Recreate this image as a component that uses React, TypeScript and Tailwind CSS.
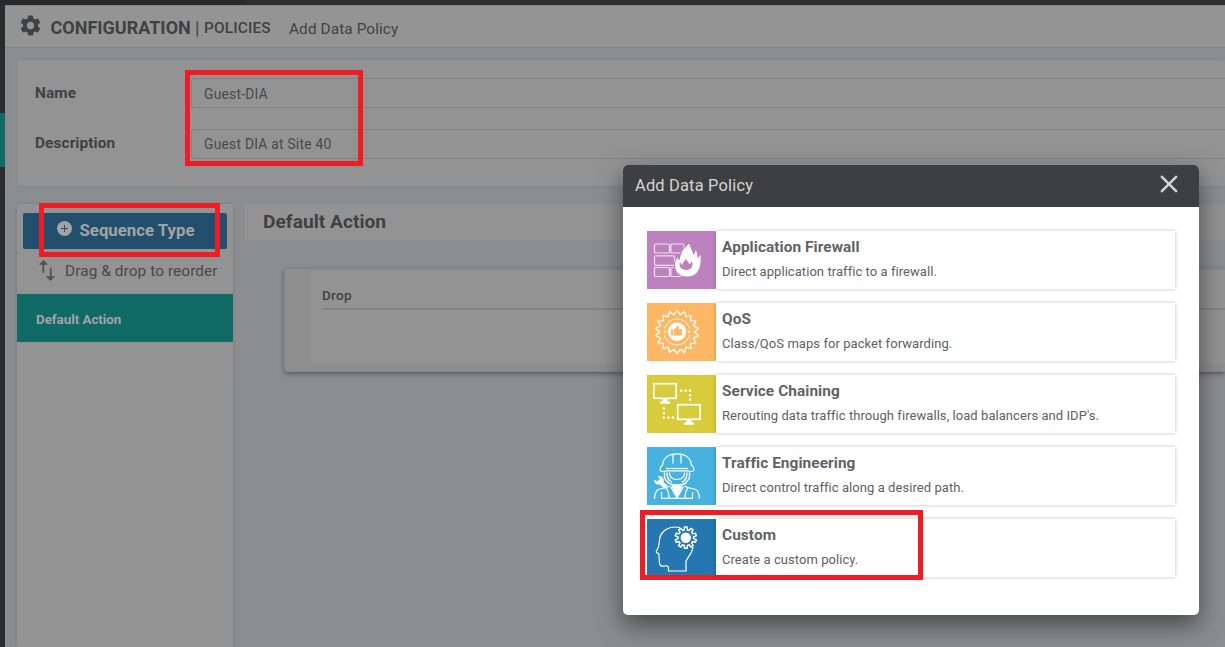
import type { ReactNode } from "react";
import { MdSettings, MdClose } from "react-icons/md";

function gearPath(cx: number, cy: number, teeth: number, outer: number, inner: number) {
  const step = (Math.PI * 2) / teeth;
  const parts: string[] = [];
  for (let i = 0; i < teeth; i++) {
    const a = i * step - Math.PI / 2;
    [
      [-0.32, inner],
      [-0.2, outer],
      [0.2, outer],
      [0.32, inner],
    ].forEach(([k, r]) => {
      const t = a + k * step;
      parts.push(`${(cx + r * Math.cos(t)).toFixed(2)} ${(cy + r * Math.sin(t)).toFixed(2)}`);
    });
  }
  return `M${parts.join("L")}Z`;
}

function burstPath(cx: number, cy: number, points: number, outer: number, inner: number) {
  const parts: string[] = [];
  for (let i = 0; i < points * 2; i++) {
    const t = (i * Math.PI) / points - Math.PI / 2;
    const r = i % 2 ? inner : outer;
    parts.push(`${(cx + r * Math.cos(t)).toFixed(2)} ${(cy + r * Math.sin(t)).toFixed(2)}`);
  }
  return `M${parts.join("L")}Z`;
}

function Tile({ children }: { children: ReactNode }) {
  return (
    <svg width="69" height="58" viewBox="0 0 69 58" fill="none" stroke="#fff" strokeWidth="1.2" strokeLinejoin="round">
      {children}
    </svg>
  );
}

function FirewallIcon() {
  return (
    <Tile>
      <g stroke="#f0dff0">
        <rect x="7.5" y="13" width="15" height="9" rx="1" />
        <rect x="24" y="13" width="13" height="9" rx="1" />
        <rect x="7.5" y="24.800" width="20" height="9.500" rx="1" />
        <rect x="7.5" y="36.500" width="15" height="9" rx="1" />
        <rect x="24" y="36.500" width="12" height="9" rx="1" />
      </g>
      <path
        d="M42.500 11C43 16 46 18 46.500 23C48 21 48.500 19.500 48.500 17C51 20 50.500 23.500 51 26C52 25 53 23.500 53.500 21.500C55 29 54 37 50.500 41.500C48 45 44 46 40 46C33.500 46 28.500 42.500 27.500 36C27 31.500 28.500 28 30.500 25.500C31.500 27 31.500 27.500 32 28.500C33 25 33 23.500 34.500 20.500C36 17 40 15 42.500 11Z"
        fill="#fff"
        stroke="#bd82bd"
        strokeWidth="1.2"
      />
      <path
        d="M38.500 27.500C40 30 41.800 31 42.300 33.500C43.500 32.800 44 31.500 44.500 30C46.500 34 45.500 38.500 39.500 39C33.500 38.500 31.800 35.500 32.800 31C34 32.300 34.500 33.500 35.200 34.200C35.500 31.500 38 30 38.500 27.500Z"
        fill="#bd82bd"
        stroke="none"
      />
    </Tile>
  );
}

function QosIcon() {
  return (
    <Tile>
      <path d={burstPath(30, 29, 18, 21.7, 17.6)} strokeWidth="1.300" />
      <circle cx="30" cy="29" r="13" strokeWidth="0.900" />
      <path d="M17.500 25.500V32M42.500 25.500V32" stroke="#feb765" strokeWidth="4" />
      <circle cx="30" cy="28.800" r="9.200" fill="#fff" stroke="none" />
      <circle cx="18" cy="28.700" r="1.200" fill="#fff" stroke="none" />
      <circle cx="42" cy="28.700" r="1.200" fill="#fff" stroke="none" />
      <path d="M24 26.500H26.300V32.500H24ZM27.100 26.500L29.500 24.500V23C31.500 22.500 32.500 23.500 31.700 26H35V32.500H27.100Z" fill="#feb765" stroke="none" />
    </Tile>
  );
}

function ChainIcon() {
  return (
    <Tile>
      <rect x="6.800" y="8.700" width="22.400" height="14.600" strokeWidth="1.700" strokeLinejoin="miter" />
      <path d="M15.500 24H20.500V26.500H23V28.700H13V26.500H15.500Z" fill="#fff" stroke="none" />
      <rect x="30.700" y="29.700" width="22.400" height="14.600" strokeWidth="1.700" strokeLinejoin="miter" />
      <path d="M39.500 45H44.500V47.500H47V49.700H37V47.500H39.500Z" fill="#fff" stroke="none" />
      <path d="M33 14.500h2.200v2.200h-2.200zM37.500 14.500h2.200v2.200h-2.200zM42 14.500h2.200v2.200h-2.200zM42 19h2.200v2.200h-2.200zM42 23.500h2.200v2.200h-2.200zM15.800 32.500h2.200v2.200h-2.200zM15.800 37h2.200v2.200h-2.200zM15.800 41.500h2.200v2.200h-2.200zM20.300 41.500h2.200v2.200h-2.200zM24.800 41.500h2.200v2.200h-2.200z" fill="#fff" stroke="none" />
    </Tile>
  );
}

function EngineerIcon() {
  return (
    <Tile>
      <path d="M15.500 19C15.500 11.500 21 6.800 30 6.800S44.500 11.500 44.500 19" />
      <path d="M15.500 18.500C13.500 19 13 20.500 13.200 23C13.300 24 14 24.500 16 24.500L20 23.800H40L44 24.500C46 24.500 46.700 24 46.800 23C47 20.500 46.500 19 44.500 18.500" />
      <path d="M26 7V16.500M34 7V16.500" />
      <path d="M19 21.500H41" />
      <path d="M22.500 25.500C22.500 30 25.500 32.500 30 32.500S37.500 30 37.500 25.500" />
      <path d="M17.500 25.500V30C17.500 33 20 34 21.500 36C24 38.500 27 38 30 38S36 38.500 38.500 36C40 34 42.500 33 42.500 30V25.500M20 25.500C20 30.500 22 34 25 35.300M40 25.500C40 30.500 38 34 35 35.300" strokeWidth="1.400" />
      <path d="M24.500 38.500H35.500L33.500 43.500L30 50L26.500 43.500Z" fill="#fff" stroke="none" />
      <path d="M22.500 39C19 42 12 40.500 9.500 44C8 46.500 7.500 49 7.500 52M37.500 39C41 42 48 40.500 50.500 44C52 46.500 52.500 49 52.500 52M14.500 45V51.300H45.500V45M23.500 39.500L30 51M36.500 39.500L30 51M18.500 40.500C21.500 43 22 47 22 51M41.500 40.500C38.500 43 38 47 38 51" strokeWidth="1.200" />
      <path d="M11 29C15 28.500 17.500 31.500 16.500 35.200L20.500 38.500L17 41.500L13 37.500C9.500 38.300 7 36 7.200 32.500L10.300 34.500L12.800 32.300Z" fill="#fff" stroke="none" />
    </Tile>
  );
}

function CustomIcon() {
  return (
    <Tile>
      <path d="M33 8.700C22 6 12.500 12 12.300 23C12.200 27 11.500 29 9.300 32.500C9 33.500 10 34.200 11.800 34.500L12.500 44C12.700 46.500 14 47.500 18 47C21 46.500 21.500 47.500 21.500 50V52H39V43C39 39 45 36 46 28" />
      <path d={gearPath(38.8, 18.7, 10, 10.700, 7.800)} strokeWidth="1.500" />
      <circle cx="38.800" cy="18.700" r="5.200" fill="#fff" stroke="none" />
    </Tile>
  );
}

const policies = [
  { title: "Application Firewall", text: "Direct application traffic to a firewall.", color: "bg-[#bd82bd]", icon: <FirewallIcon /> },
  { title: "QoS", text: "Class/QoS maps for packet forwarding.", color: "bg-[#feb765]", icon: <QosIcon /> },
  { title: "Service Chaining", text: "Rerouting data traffic through firewalls, load balancers and IDP's.", color: "bg-[#d8cb3c]", icon: <ChainIcon /> },
  { title: "Traffic Engineering", text: "Direct control traffic along a desired path.", color: "bg-[#47b2e0]", icon: <EngineerIcon /> },
  { title: "Custom", text: "Create a custom policy.", color: "bg-[#2477b0]", icon: <CustomIcon /> },
];

const fields = [
  { label: "Name", value: "Guest-DIA", labelLeading: "leading-[31px]", valueLeading: "leading-[30px]" },
  { label: "Description", value: "Guest DIA at Site 40", labelLeading: "leading-[29px]", valueLeading: "leading-[28px]" },
];

function Dialog() {
  return (
    <div className="absolute top-[165px] left-[623px] h-[450px] w-[576px] overflow-visible rounded-[5px] bg-white shadow-[0_10px_26px_rgba(0,0,0,0.5)]">
      <div className="flex h-[42px] items-center justify-between rounded-t-[5px] bg-[#3e3f41] pr-[15px] pl-3 text-[16.4px] tracking-[0.2px] text-[#d5d5d5]">
        <span className="pt-px">Add Data Policy</span>
        <MdClose className="-mt-1 size-[30px]" />
      </div>
      <div className="flex flex-col gap-[14px] pt-6 pr-6 pl-6">
        {policies.map((p) => (
          <div key={p.title} className="flex h-[58px]">
            <div className={`w-[69px] shrink-0 ${p.color}`}>{p.icon}</div>
            <div className="flex-1 pl-[6px] shadow-[0_0_4px_rgba(0,0,0,0.25)]">
              <div className="pt-[4px] text-[15.4px] leading-6 font-bold tracking-[0.07px] text-[#626365]">{p.title}</div>
              <div className="pt-[3px] text-[13px] leading-5 tracking-[0.06px] text-[#606163]">{p.text}</div>
            </div>
          </div>
        ))}
      </div>
    </div>
  );
}

export default function App() {
  return (
    <div className="relative h-[647px] w-[1225px] overflow-hidden bg-[#8c8d91] font-['Roboto',sans-serif]">
      <div className="flex h-[5px]">
        <div className="w-[245px] bg-[#28292b]" />
        <div className="flex-1 bg-[#2e2f31]" />
      </div>
      <div className="flex h-[642px]">
        <div className="w-[5px] shrink-0 bg-[#2a2b2d] pt-[108px]">
          <div className="h-[54px] bg-[#106b67]" />
        </div>
        <div className="flex flex-1 flex-col">
          <header className="flex h-[43px] shrink-0 items-center border-t border-b border-t-[#858585] border-b-[#838383] bg-[#949494] pl-[13px] text-[#404142]">
            <MdSettings className="-mt-[3px] size-[25px]" />
            <span className="ml-[7.5px] w-[144.5px] pt-[2px] text-[18px] font-bold whitespace-nowrap">CONFIGURATION</span>
            <span className="w-[9px] pt-px text-[18px]">|</span>
            <span className="w-[85px] pt-[4px] text-[15.400px] font-medium tracking-[0.15px]">POLICIES</span>
            <span className="pt-[6px] text-[15.400px] tracking-[0.08px]">Add Data Policy</span>
          </header>
          <section className="mt-3 ml-3 flex h-[126px] shrink-0 flex-col gap-[21px] bg-[#939393] pt-[18px] pl-[18px] shadow-[0_0_3px_rgba(0,0,0,0.12)]">
            {fields.map((f) => (
              <div key={f.label} className="flex h-[30px]">
                <div className={`w-[156px] text-[15.4px] font-bold tracking-[0.1px] text-[#404142] ${f.labelLeading}`}>{f.label}</div>
                <div
                  className={`flex-1 rounded-l-[3px] border border-r-0 border-[#838383] pl-[12px] text-[13.8px] tracking-[0.25px] text-[#484949] ${f.valueLeading}`}
                >
                  {f.value}
                </div>
              </div>
            ))}
          </section>
          <div className="mt-[18px] ml-3 flex flex-1 gap-3">
            <aside className="flex w-[216px] flex-col bg-[#939393] shadow-[0_0_3px_rgba(0,0,0,0.15)]">
              <button className="mx-[6px] mt-[9px] flex h-9 items-center rounded-[2px] bg-[#234f6e] pl-[34px] text-[16.700px] font-bold tracking-[0.05px] text-[#a3a3a3]">
                <svg className="-mt-[5px] mr-[7.5px]" width="15" height="15" viewBox="0 0 15 15">
                  <circle cx="7.500" cy="7.500" r="7.500" fill="#a3a3a3" />
                  <path d="M7.500 4V11M4 7.500H11" stroke="#234f6e" strokeWidth="1" />
                </svg>
                Sequence Type
              </button>
              <div className="flex h-[45px] items-center pl-[22px] text-[15.400px] tracking-[0.08px] text-[#484949]">
                <svg className="mt-[-2px] mr-[10px]" width="16" height="21" viewBox="5 3 14 18" preserveAspectRatio="none" fill="#505151">
                  <path d="M16 17.010V10H14.500V17.010H11L15 21L19 17.010ZM9 3L5 6.990H8V14H9.500V6.990H13Z" />
                </svg>
                Drag &amp; drop to reorder
              </div>
              <div className="h-12 bg-[#106b67] pl-[19px] text-[13.300px] leading-[51px] font-bold text-[#a3a3a3]">Default Action</div>
            </aside>
            <main className="flex-1">
              <div className="h-9 bg-[#939393] pl-[18px] text-[19.200px] leading-[36px] font-bold text-[#404142]">Default Action</div>
              <div className="mt-7 ml-[39px] h-[104px] rounded-l-[3px] border border-r-0 border-[#858585] bg-[#8e8e8e] pt-[2px] pl-[25px] shadow-[0_2px_5px_rgba(0,0,0,0.35)]">
                <div className="h-[92px] bg-[#939393] pl-3">
                  <div className="h-[39px] border-b-2 border-[#848484] pt-[14px] text-[13.500px] leading-5 font-medium tracking-[0.3px] text-[#404142]">Drop</div>
                </div>
              </div>
            </main>
          </div>
        </div>
      </div>
      <Dialog />
      <div className="absolute top-[70px] left-[185px] h-24 w-[178px] border-[5px] border-[#ee1c25]" />
      <div className="absolute top-[203px] left-[39px] h-[54px] w-[181px] border-[5px] border-[#ee1c25]" />
      <div className="absolute top-[510px] left-[640px] h-[70px] w-[283px] border-[5px] border-[#ee1c25]" />
    </div>
  );
}
